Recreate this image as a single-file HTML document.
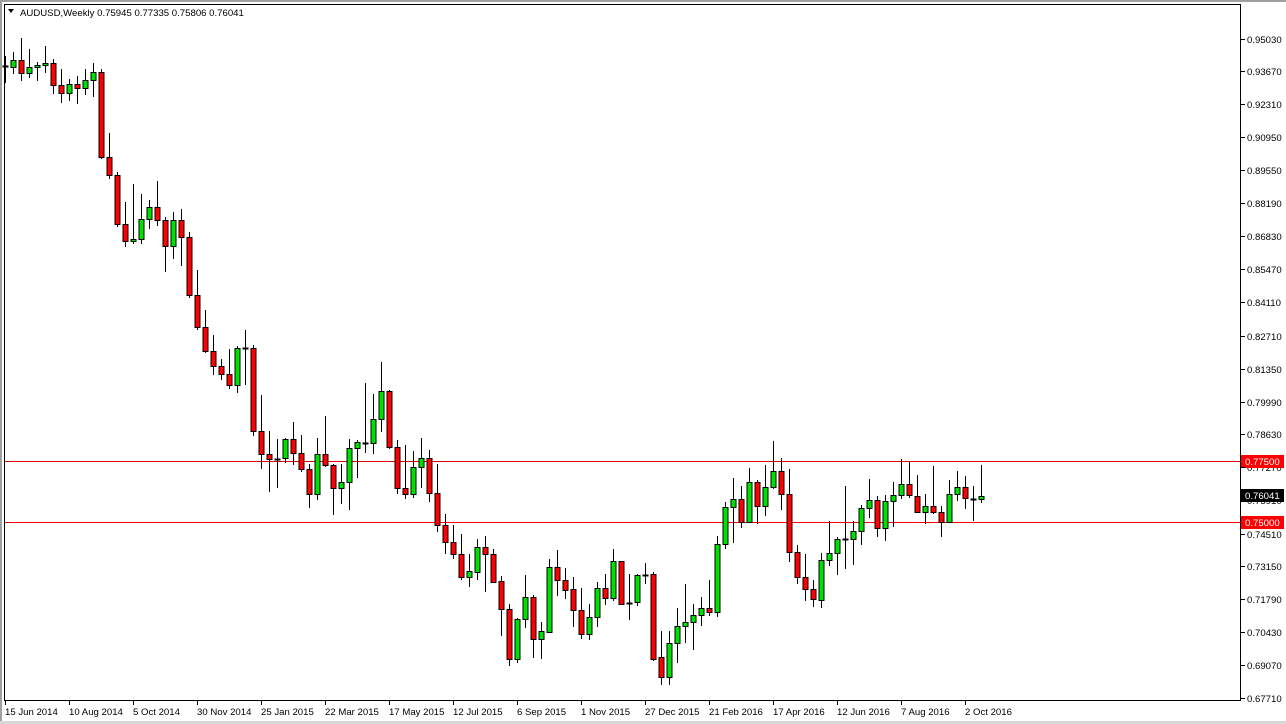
<!DOCTYPE html>
<html><head><meta charset="utf-8"><style>
html,body{margin:0;padding:0;background:#fff;}
body{width:1286px;height:724px;overflow:hidden;position:relative;font-family:"Liberation Sans",sans-serif;}
svg{position:absolute;left:0;top:0;}
text{font-family:"Liberation Sans",sans-serif;font-size:9.6px;fill:#000;}
</style></head><body>
<svg id="s" width="1286" height="724" xmlns="http://www.w3.org/2000/svg">
<rect x="0" y="0" width="1286" height="724" fill="#fff"/>
<rect x="0" y="0" width="2" height="724" fill="#a0a0a0"/>
<rect x="0" y="0" width="1286" height="2" fill="#a0a0a0"/>
<rect x="0" y="721" width="1286" height="3" fill="#d8d8d8"/>
<rect x="4.5" y="4.5" width="1236" height="696" fill="none" stroke="#000" stroke-width="1"/>
<line x1="5" y1="461.5" x2="1240" y2="461.5" stroke="#e00000" stroke-width="1"/>
<line x1="5" y1="522.5" x2="1240" y2="522.5" stroke="#f00" stroke-width="1"/>
<g id="c"></g>
<polygon points="8,9 14,9 11,13" fill="#000"/>
<text x="20" y="16">AUDUSD,Weekly  0.75945 0.77335 0.75806 0.76041</text>
<g id="yax">
<text x="1247" y="43">0.95030</text><text x="1247" y="75">0.93670</text><text x="1247" y="108">0.92310</text>
<text x="1247" y="141">0.90950</text><text x="1247" y="174">0.89550</text><text x="1247" y="207">0.88190</text>
<text x="1247" y="240">0.86830</text><text x="1247" y="273">0.85470</text><text x="1247" y="306">0.84110</text>
<text x="1247" y="340">0.82710</text><text x="1247" y="373">0.81350</text><text x="1247" y="406">0.79990</text>
<text x="1247" y="438">0.78630</text><text x="1247" y="471">0.77270</text><text x="1247" y="504">0.75910</text>
<text x="1247" y="538">0.74510</text><text x="1247" y="570">0.73150</text><text x="1247" y="603">0.71790</text>
<text x="1247" y="636">0.70430</text><text x="1247" y="669">0.69070</text><text x="1247" y="702">0.67710</text>
</g>
<rect x="1241" y="455" width="43" height="13" fill="#f00"/><text x="1245" y="465" style="fill:#fff">0.77500</text>
<rect x="1241" y="489" width="43" height="13" fill="#000"/><text x="1245" y="499" style="fill:#fff">0.76041</text>
<rect x="1241" y="516" width="43" height="13" fill="#f00"/><text x="1245" y="526" style="fill:#fff">0.75000</text>
<g id="xax">
<text x="5" y="715">15 Jun 2014</text><text x="69" y="715">10 Aug 2014</text><text x="133" y="715">5 Oct 2014</text>
<text x="197" y="715">30 Nov 2014</text><text x="261" y="715">25 Jan 2015</text><text x="325" y="715">22 Mar 2015</text>
<text x="389" y="715">17 May 2015</text><text x="453" y="715">12 Jul 2015</text><text x="517" y="715">6 Sep 2015</text>
<text x="581" y="715">1 Nov 2015</text><text x="645" y="715">27 Dec 2015</text><text x="709" y="715">21 Feb 2016</text>
<text x="773" y="715">17 Apr 2016</text><text x="837" y="715">12 Jun 2016</text><text x="901" y="715">7 Aug 2016</text>
<text x="965" y="715">2 Oct 2016</text>
</g>
<g id="ticks"></g>
</svg>
<script>
var D=[
[56,66,66,83,'d'],[52,60,67,74,'g'],[38,60,73,81,'r'],[49,67,73,78,'g'],[62,65,67,81,'g'],[46,63,65,73,'g'],
[59,63,85,94,'r'],[69,85,93,103,'r'],[79,84,93,101,'g'],[76,84,88,104,'r'],[69,80,88,95,'g'],[63,72,80,97,'g'],
[69,72,157,159,'r'],[133,157,175,179,'r'],[172,175,224,227,'r'],[202,224,241,247,'r'],[184,239,241,244,'g'],[194,219,239,244,'g'],
[200,207,219,229,'g'],[181,207,220,226,'r'],[217,220,246,272,'r'],[212,220,246,259,'g'],[209,220,237,266,'r'],[232,237,295,298,'r'],
[270,295,327,330,'r'],[310,327,351,353,'r'],[335,351,366,375,'r'],[359,366,374,380,'r'],[349,374,385,389,'r'],[346,348,385,393,'g'],
[330,348,348,385,'d'],[345,348,431,436,'r'],[395,431,454,469,'r'],[431,454,459,492,'r'],[439,459,459,488,'d'],[438,439,458,463,'g'],
[422,439,453,465,'r'],[435,453,469,472,'r'],[464,469,494,508,'r'],[438,454,494,500,'g'],[416,454,465,467,'r'],[464,465,488,515,'r'],
[464,482,488,504,'g'],[439,448,482,510,'g'],[440,442,448,478,'g'],[383,443,443,453,'d'],[394,419,443,454,'g'],[362,391,419,432,'g'],
[390,391,447,449,'r'],[440,447,488,494,'r'],[445,488,494,499,'r'],[451,467,494,498,'g'],[438,458,467,488,'g'],[450,458,493,502,'r'],
[464,493,525,532,'r'],[514,525,542,554,'r'],[525,542,554,559,'r'],[534,554,577,580,'r'],[554,571,577,587,'g'],[539,547,572,580,'g'],
[536,547,554,592,'r'],[549,554,582,582,'r'],[576,581,609,636,'r'],[604,609,659,666,'r'],[618,619,659,663,'g'],[575,597,619,628,'g'],
[595,597,639,658,'r'],[622,631,639,659,'g'],[559,567,632,633,'g'],[550,567,580,596,'r'],[568,580,590,599,'r'],[577,589,610,627,'r'],
[588,610,634,639,'r'],[604,617,634,640,'g'],[582,588,617,627,'g'],[574,588,598,605,'r'],[549,561,598,601,'g'],[561,561,604,605,'r'],
[574,603,603,620,'d'],[574,575,602,606,'g'],[563,575,575,584,'d'],[572,574,659,661,'r'],[631,657,677,685,'r'],[631,643,677,685,'g'],
[608,626,643,663,'g'],[584,622,626,643,'g'],[604,615,622,650,'g'],[597,608,615,626,'g'],[580,608,612,616,'r'],[536,544,612,617,'g'],
[502,507,544,549,'g'],[478,499,507,543,'g'],[486,499,522,528,'r'],[468,482,522,523,'g'],[480,482,506,524,'r'],[465,487,506,516,'g'],
[441,471,487,489,'g'],[458,471,494,510,'r'],[469,494,552,562,'r'],[545,552,577,584,'r'],[554,577,589,601,'r'],[580,589,599,607,'r'],
[553,560,600,608,'g'],[521,553,560,566,'g'],[537,539,553,575,'g'],[486,539,539,569,'d'],[521,531,539,565,'g'],[505,508,531,545,'g'],
[479,500,508,518,'g'],[496,500,528,537,'r'],[495,501,528,541,'g'],[482,495,501,527,'g'],[459,484,495,499,'g'],[462,484,495,498,'r'],
[475,496,512,513,'r'],[494,506,512,524,'g'],[466,506,512,514,'r'],[506,512,522,537,'r'],[480,494,522,522,'g'],[471,487,494,501,'g'],
[476,487,498,509,'r'],[486,499,499,521,'d'],[465,496,499,503,'g']
];
var h='';
for(var i=0;i<D.length;i++){
 var d=D[i],cx=Math.round(5+8*i)+0.5;
 h+='<line x1="'+cx+'" y1="'+d[0]+'" x2="'+cx+'" y2="'+d[3]+'" stroke="#000" stroke-width="1"/>';
 if(d[4]=='d'){h+='<line x1="'+(cx-3)+'" y1="'+(d[1]+0.5)+'" x2="'+(cx+3)+'" y2="'+(d[1]+0.5)+'" stroke="#000" stroke-width="2"/>';}
 else{var f=d[4]=='g'?'#00e000':'#f00';var hh=Math.max(2,d[2]-d[1]);
 h+='<rect x="'+(cx-2.5)+'" y="'+(d[1]+0.5)+'" width="5" height="'+hh+'" fill="'+f+'" stroke="#000" stroke-width="1"/>';}
}
document.getElementById('c').innerHTML=h;
var t='';
var ys=[39,71,104,137,170,203,236,269,302,336,369,402,434,467,500,534,566,599,632,665,698];
for(var k=0;k<ys.length;k++)t+='<line x1="1241" y1="'+(ys[k]+0.5)+'" x2="1245" y2="'+(ys[k]+0.5)+'" stroke="#000"/>';
for(var k=0;k<16;k++){var x=5+64*k+0.5;t+='<line x1="'+x+'" y1="701" x2="'+x+'" y2="705" stroke="#000"/>';}
document.getElementById('ticks').innerHTML=t;
</script>
</body></html>
